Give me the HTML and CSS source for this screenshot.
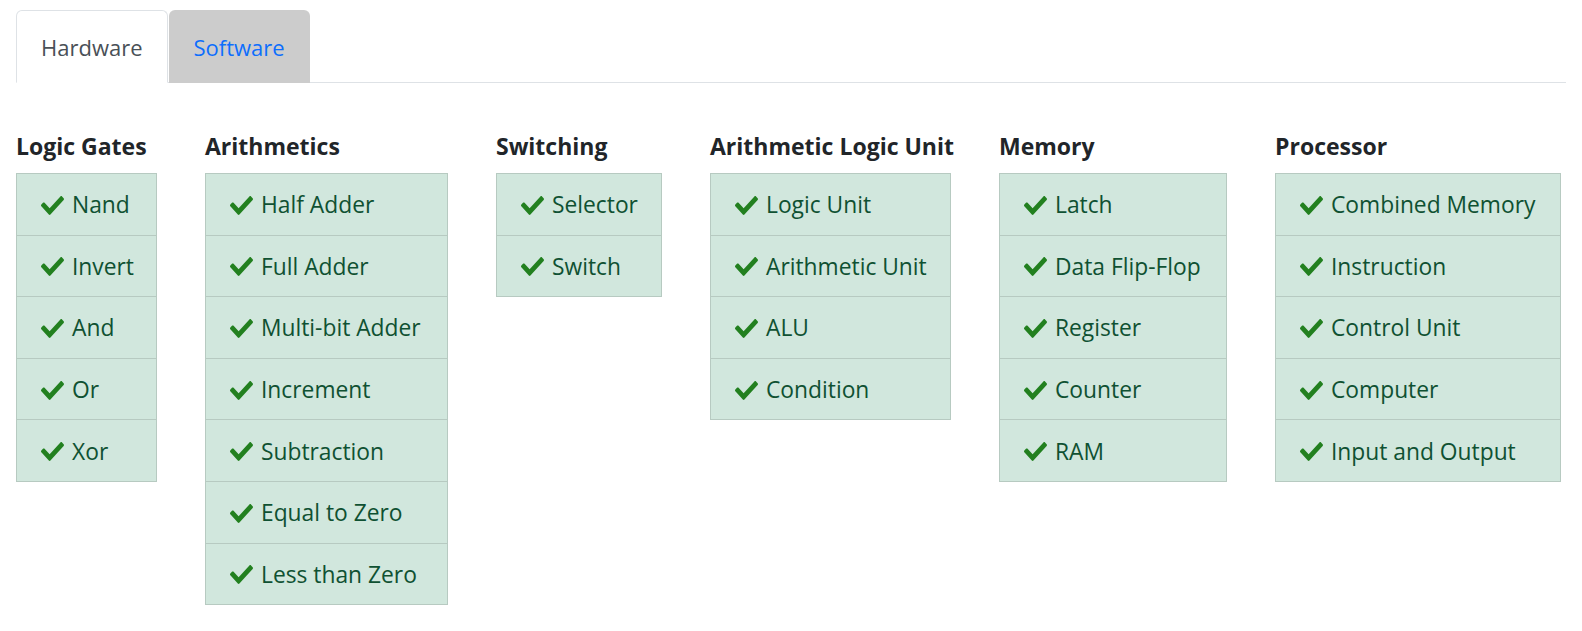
FILE: index.html
```html
<!DOCTYPE html>
<html lang="en">
<head>
<meta charset="utf-8">
<title>Levels</title>
<link rel="stylesheet" href="styles.css">
</head>
<body>
<div class="page">
  <nav class="tabs">
    <a class="tab active">Hardware</a>
    <a class="tab">Software</a>
  </nav>
  <main class="levels">
    <section class="group">
      <h5 class="group-title">Logic Gates</h5>
      <ul class="list">
        <li class="item"><svg class="check" viewBox="0 64 512 384" preserveAspectRatio="none"><path d="M173.898 439.404l-166.4-166.4c-9.997-9.997-9.997-26.206 0-36.204l36.203-36.204c9.997-9.998 26.207-9.998 36.204 0L192 312.69 432.095 72.596c9.997-9.997 26.207-9.997 36.204 0l36.203 36.204c9.997 9.997 9.997 26.206 0 36.204l-294.4 294.401c-9.998 9.997-26.207 9.997-36.204-.001z"/></svg>Nand</li>
        <li class="item"><svg class="check" viewBox="0 64 512 384" preserveAspectRatio="none"><path d="M173.898 439.404l-166.4-166.4c-9.997-9.997-9.997-26.206 0-36.204l36.203-36.204c9.997-9.998 26.207-9.998 36.204 0L192 312.69 432.095 72.596c9.997-9.997 26.207-9.997 36.204 0l36.203 36.204c9.997 9.997 9.997 26.206 0 36.204l-294.4 294.401c-9.998 9.997-26.207 9.997-36.204-.001z"/></svg>Invert</li>
        <li class="item"><svg class="check" viewBox="0 64 512 384" preserveAspectRatio="none"><path d="M173.898 439.404l-166.4-166.4c-9.997-9.997-9.997-26.206 0-36.204l36.203-36.204c9.997-9.998 26.207-9.998 36.204 0L192 312.69 432.095 72.596c9.997-9.997 26.207-9.997 36.204 0l36.203 36.204c9.997 9.997 9.997 26.206 0 36.204l-294.4 294.401c-9.998 9.997-26.207 9.997-36.204-.001z"/></svg>And</li>
        <li class="item"><svg class="check" viewBox="0 64 512 384" preserveAspectRatio="none"><path d="M173.898 439.404l-166.4-166.4c-9.997-9.997-9.997-26.206 0-36.204l36.203-36.204c9.997-9.998 26.207-9.998 36.204 0L192 312.69 432.095 72.596c9.997-9.997 26.207-9.997 36.204 0l36.203 36.204c9.997 9.997 9.997 26.206 0 36.204l-294.4 294.401c-9.998 9.997-26.207 9.997-36.204-.001z"/></svg>Or</li>
        <li class="item"><svg class="check" viewBox="0 64 512 384" preserveAspectRatio="none"><path d="M173.898 439.404l-166.4-166.4c-9.997-9.997-9.997-26.206 0-36.204l36.203-36.204c9.997-9.998 26.207-9.998 36.204 0L192 312.69 432.095 72.596c9.997-9.997 26.207-9.997 36.204 0l36.203 36.204c9.997 9.997 9.997 26.206 0 36.204l-294.4 294.401c-9.998 9.997-26.207 9.997-36.204-.001z"/></svg>Xor</li>
      </ul>
    </section>
    <section class="group">
      <h5 class="group-title">Arithmetics</h5>
      <ul class="list">
        <li class="item"><svg class="check" viewBox="0 64 512 384" preserveAspectRatio="none"><path d="M173.898 439.404l-166.4-166.4c-9.997-9.997-9.997-26.206 0-36.204l36.203-36.204c9.997-9.998 26.207-9.998 36.204 0L192 312.69 432.095 72.596c9.997-9.997 26.207-9.997 36.204 0l36.203 36.204c9.997 9.997 9.997 26.206 0 36.204l-294.4 294.401c-9.998 9.997-26.207 9.997-36.204-.001z"/></svg>Half Adder</li>
        <li class="item"><svg class="check" viewBox="0 64 512 384" preserveAspectRatio="none"><path d="M173.898 439.404l-166.4-166.4c-9.997-9.997-9.997-26.206 0-36.204l36.203-36.204c9.997-9.998 26.207-9.998 36.204 0L192 312.69 432.095 72.596c9.997-9.997 26.207-9.997 36.204 0l36.203 36.204c9.997 9.997 9.997 26.206 0 36.204l-294.4 294.401c-9.998 9.997-26.207 9.997-36.204-.001z"/></svg>Full Adder</li>
        <li class="item"><svg class="check" viewBox="0 64 512 384" preserveAspectRatio="none"><path d="M173.898 439.404l-166.4-166.4c-9.997-9.997-9.997-26.206 0-36.204l36.203-36.204c9.997-9.998 26.207-9.998 36.204 0L192 312.69 432.095 72.596c9.997-9.997 26.207-9.997 36.204 0l36.203 36.204c9.997 9.997 9.997 26.206 0 36.204l-294.4 294.401c-9.998 9.997-26.207 9.997-36.204-.001z"/></svg>Multi-bit Adder</li>
        <li class="item"><svg class="check" viewBox="0 64 512 384" preserveAspectRatio="none"><path d="M173.898 439.404l-166.4-166.4c-9.997-9.997-9.997-26.206 0-36.204l36.203-36.204c9.997-9.998 26.207-9.998 36.204 0L192 312.69 432.095 72.596c9.997-9.997 26.207-9.997 36.204 0l36.203 36.204c9.997 9.997 9.997 26.206 0 36.204l-294.4 294.401c-9.998 9.997-26.207 9.997-36.204-.001z"/></svg>Increment</li>
        <li class="item"><svg class="check" viewBox="0 64 512 384" preserveAspectRatio="none"><path d="M173.898 439.404l-166.4-166.4c-9.997-9.997-9.997-26.206 0-36.204l36.203-36.204c9.997-9.998 26.207-9.998 36.204 0L192 312.69 432.095 72.596c9.997-9.997 26.207-9.997 36.204 0l36.203 36.204c9.997 9.997 9.997 26.206 0 36.204l-294.4 294.401c-9.998 9.997-26.207 9.997-36.204-.001z"/></svg>Subtraction</li>
        <li class="item"><svg class="check" viewBox="0 64 512 384" preserveAspectRatio="none"><path d="M173.898 439.404l-166.4-166.4c-9.997-9.997-9.997-26.206 0-36.204l36.203-36.204c9.997-9.998 26.207-9.998 36.204 0L192 312.69 432.095 72.596c9.997-9.997 26.207-9.997 36.204 0l36.203 36.204c9.997 9.997 9.997 26.206 0 36.204l-294.4 294.401c-9.998 9.997-26.207 9.997-36.204-.001z"/></svg>Equal to Zero</li>
        <li class="item"><svg class="check" viewBox="0 64 512 384" preserveAspectRatio="none"><path d="M173.898 439.404l-166.4-166.4c-9.997-9.997-9.997-26.206 0-36.204l36.203-36.204c9.997-9.998 26.207-9.998 36.204 0L192 312.69 432.095 72.596c9.997-9.997 26.207-9.997 36.204 0l36.203 36.204c9.997 9.997 9.997 26.206 0 36.204l-294.4 294.401c-9.998 9.997-26.207 9.997-36.204-.001z"/></svg>Less than Zero</li>
      </ul>
    </section>
    <section class="group">
      <h5 class="group-title">Switching</h5>
      <ul class="list">
        <li class="item"><svg class="check" viewBox="0 64 512 384" preserveAspectRatio="none"><path d="M173.898 439.404l-166.4-166.4c-9.997-9.997-9.997-26.206 0-36.204l36.203-36.204c9.997-9.998 26.207-9.998 36.204 0L192 312.69 432.095 72.596c9.997-9.997 26.207-9.997 36.204 0l36.203 36.204c9.997 9.997 9.997 26.206 0 36.204l-294.4 294.401c-9.998 9.997-26.207 9.997-36.204-.001z"/></svg>Selector</li>
        <li class="item"><svg class="check" viewBox="0 64 512 384" preserveAspectRatio="none"><path d="M173.898 439.404l-166.4-166.4c-9.997-9.997-9.997-26.206 0-36.204l36.203-36.204c9.997-9.998 26.207-9.998 36.204 0L192 312.69 432.095 72.596c9.997-9.997 26.207-9.997 36.204 0l36.203 36.204c9.997 9.997 9.997 26.206 0 36.204l-294.4 294.401c-9.998 9.997-26.207 9.997-36.204-.001z"/></svg>Switch</li>
      </ul>
    </section>
    <section class="group">
      <h5 class="group-title">Arithmetic Logic Unit</h5>
      <ul class="list">
        <li class="item"><svg class="check" viewBox="0 64 512 384" preserveAspectRatio="none"><path d="M173.898 439.404l-166.4-166.4c-9.997-9.997-9.997-26.206 0-36.204l36.203-36.204c9.997-9.998 26.207-9.998 36.204 0L192 312.69 432.095 72.596c9.997-9.997 26.207-9.997 36.204 0l36.203 36.204c9.997 9.997 9.997 26.206 0 36.204l-294.4 294.401c-9.998 9.997-26.207 9.997-36.204-.001z"/></svg>Logic Unit</li>
        <li class="item"><svg class="check" viewBox="0 64 512 384" preserveAspectRatio="none"><path d="M173.898 439.404l-166.4-166.4c-9.997-9.997-9.997-26.206 0-36.204l36.203-36.204c9.997-9.998 26.207-9.998 36.204 0L192 312.69 432.095 72.596c9.997-9.997 26.207-9.997 36.204 0l36.203 36.204c9.997 9.997 9.997 26.206 0 36.204l-294.4 294.401c-9.998 9.997-26.207 9.997-36.204-.001z"/></svg>Arithmetic Unit</li>
        <li class="item"><svg class="check" viewBox="0 64 512 384" preserveAspectRatio="none"><path d="M173.898 439.404l-166.4-166.4c-9.997-9.997-9.997-26.206 0-36.204l36.203-36.204c9.997-9.998 26.207-9.998 36.204 0L192 312.69 432.095 72.596c9.997-9.997 26.207-9.997 36.204 0l36.203 36.204c9.997 9.997 9.997 26.206 0 36.204l-294.4 294.401c-9.998 9.997-26.207 9.997-36.204-.001z"/></svg>ALU</li>
        <li class="item"><svg class="check" viewBox="0 64 512 384" preserveAspectRatio="none"><path d="M173.898 439.404l-166.4-166.4c-9.997-9.997-9.997-26.206 0-36.204l36.203-36.204c9.997-9.998 26.207-9.998 36.204 0L192 312.69 432.095 72.596c9.997-9.997 26.207-9.997 36.204 0l36.203 36.204c9.997 9.997 9.997 26.206 0 36.204l-294.4 294.401c-9.998 9.997-26.207 9.997-36.204-.001z"/></svg>Condition</li>
      </ul>
    </section>
    <section class="group">
      <h5 class="group-title">Memory</h5>
      <ul class="list">
        <li class="item"><svg class="check" viewBox="0 64 512 384" preserveAspectRatio="none"><path d="M173.898 439.404l-166.4-166.4c-9.997-9.997-9.997-26.206 0-36.204l36.203-36.204c9.997-9.998 26.207-9.998 36.204 0L192 312.69 432.095 72.596c9.997-9.997 26.207-9.997 36.204 0l36.203 36.204c9.997 9.997 9.997 26.206 0 36.204l-294.4 294.401c-9.998 9.997-26.207 9.997-36.204-.001z"/></svg>Latch</li>
        <li class="item"><svg class="check" viewBox="0 64 512 384" preserveAspectRatio="none"><path d="M173.898 439.404l-166.4-166.4c-9.997-9.997-9.997-26.206 0-36.204l36.203-36.204c9.997-9.998 26.207-9.998 36.204 0L192 312.69 432.095 72.596c9.997-9.997 26.207-9.997 36.204 0l36.203 36.204c9.997 9.997 9.997 26.206 0 36.204l-294.4 294.401c-9.998 9.997-26.207 9.997-36.204-.001z"/></svg>Data Flip-Flop</li>
        <li class="item"><svg class="check" viewBox="0 64 512 384" preserveAspectRatio="none"><path d="M173.898 439.404l-166.4-166.4c-9.997-9.997-9.997-26.206 0-36.204l36.203-36.204c9.997-9.998 26.207-9.998 36.204 0L192 312.69 432.095 72.596c9.997-9.997 26.207-9.997 36.204 0l36.203 36.204c9.997 9.997 9.997 26.206 0 36.204l-294.4 294.401c-9.998 9.997-26.207 9.997-36.204-.001z"/></svg>Register</li>
        <li class="item"><svg class="check" viewBox="0 64 512 384" preserveAspectRatio="none"><path d="M173.898 439.404l-166.4-166.4c-9.997-9.997-9.997-26.206 0-36.204l36.203-36.204c9.997-9.998 26.207-9.998 36.204 0L192 312.69 432.095 72.596c9.997-9.997 26.207-9.997 36.204 0l36.203 36.204c9.997 9.997 9.997 26.206 0 36.204l-294.4 294.401c-9.998 9.997-26.207 9.997-36.204-.001z"/></svg>Counter</li>
        <li class="item"><svg class="check" viewBox="0 64 512 384" preserveAspectRatio="none"><path d="M173.898 439.404l-166.4-166.4c-9.997-9.997-9.997-26.206 0-36.204l36.203-36.204c9.997-9.998 26.207-9.998 36.204 0L192 312.69 432.095 72.596c9.997-9.997 26.207-9.997 36.204 0l36.203 36.204c9.997 9.997 9.997 26.206 0 36.204l-294.4 294.401c-9.998 9.997-26.207 9.997-36.204-.001z"/></svg>RAM</li>
      </ul>
    </section>
    <section class="group">
      <h5 class="group-title">Processor</h5>
      <ul class="list">
        <li class="item"><svg class="check" viewBox="0 64 512 384" preserveAspectRatio="none"><path d="M173.898 439.404l-166.4-166.4c-9.997-9.997-9.997-26.206 0-36.204l36.203-36.204c9.997-9.998 26.207-9.998 36.204 0L192 312.69 432.095 72.596c9.997-9.997 26.207-9.997 36.204 0l36.203 36.204c9.997 9.997 9.997 26.206 0 36.204l-294.4 294.401c-9.998 9.997-26.207 9.997-36.204-.001z"/></svg>Combined Memory</li>
        <li class="item"><svg class="check" viewBox="0 64 512 384" preserveAspectRatio="none"><path d="M173.898 439.404l-166.4-166.4c-9.997-9.997-9.997-26.206 0-36.204l36.203-36.204c9.997-9.998 26.207-9.998 36.204 0L192 312.69 432.095 72.596c9.997-9.997 26.207-9.997 36.204 0l36.203 36.204c9.997 9.997 9.997 26.206 0 36.204l-294.4 294.401c-9.998 9.997-26.207 9.997-36.204-.001z"/></svg>Instruction</li>
        <li class="item"><svg class="check" viewBox="0 64 512 384" preserveAspectRatio="none"><path d="M173.898 439.404l-166.4-166.4c-9.997-9.997-9.997-26.206 0-36.204l36.203-36.204c9.997-9.998 26.207-9.998 36.204 0L192 312.69 432.095 72.596c9.997-9.997 26.207-9.997 36.204 0l36.203 36.204c9.997 9.997 9.997 26.206 0 36.204l-294.4 294.401c-9.998 9.997-26.207 9.997-36.204-.001z"/></svg>Control Unit</li>
        <li class="item"><svg class="check" viewBox="0 64 512 384" preserveAspectRatio="none"><path d="M173.898 439.404l-166.4-166.4c-9.997-9.997-9.997-26.206 0-36.204l36.203-36.204c9.997-9.998 26.207-9.998 36.204 0L192 312.69 432.095 72.596c9.997-9.997 26.207-9.997 36.204 0l36.203 36.204c9.997 9.997 9.997 26.206 0 36.204l-294.4 294.401c-9.998 9.997-26.207 9.997-36.204-.001z"/></svg>Computer</li>
        <li class="item"><svg class="check" viewBox="0 64 512 384" preserveAspectRatio="none"><path d="M173.898 439.404l-166.4-166.4c-9.997-9.997-9.997-26.206 0-36.204l36.203-36.204c9.997-9.998 26.207-9.998 36.204 0L192 312.69 432.095 72.596c9.997-9.997 26.207-9.997 36.204 0l36.203 36.204c9.997 9.997 9.997 26.206 0 36.204l-294.4 294.401c-9.998 9.997-26.207 9.997-36.204-.001z"/></svg>Input and Output</li>
      </ul>
    </section>
  </main>
</div>
</body>
</html>
```

FILE: styles.css
```css
* { box-sizing: border-box; }

html, body {
  margin: 0;
  background: #fff;
}

body {
  font-family: "Open Sans", "Noto Sans", sans-serif;
  color: #212529;
}

.page {
  padding: 10px 16px 0;
}

.tabs {
  display: flex;
  border-bottom: 1px solid #dee2e6;
}

.tab {
  display: block;
  margin-bottom: -1px;
  padding: 21px 24px 19px;
  font-size: 22px;
  line-height: 31px;
  color: #0d6efd;
  background: #cccccc;
  border: 1px solid transparent;
  border-radius: 6px 6px 0 0;
  cursor: pointer;
}

.tab.active {
  color: #495057;
  background: #fff;
  border-color: #dee2e6 #dee2e6 #fff;
  margin-right: 1px;
}

.levels {
  display: grid;
  grid-template-columns: 141px 243px 166px 241px 228px 286px;
  column-gap: 48px;
  align-items: start;
  padding-top: 50px;
}

.group-title {
  margin: 0 0 14px;
  font-size: 23px;
  line-height: 26px;
  font-weight: 700;
  color: #212529;
  white-space: nowrap;
}

.list {
  list-style: none;
  margin: 0;
  padding: 0;
  border: 1px solid #b7cac1;
  background: #d1e7dd;
}

.item {
  display: flex;
  align-items: center;
  padding: 16.3px 24px 14.3px;
  font-size: 22.8px;
  line-height: 30px;
  color: #0f5132;
  white-space: nowrap;
  border-top: 1px solid #b7cac1;
}

.item:first-child {
  border-top: 0;
}

.check {
  flex: none;
  width: 23px;
  height: 19px;
  margin-right: 8px;
  fill: #22801f;
}
```
